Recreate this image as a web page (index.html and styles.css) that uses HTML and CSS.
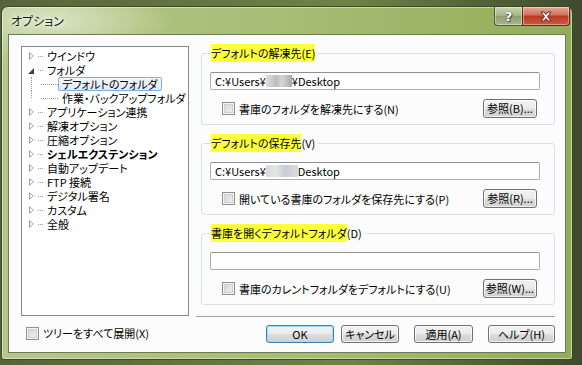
FILE: index.html
```html
<!DOCTYPE html>
<html lang="ja">
<head>
  <meta charset="UTF-8">
  <title>オプション</title>
  <link rel="stylesheet" href="styles.css">
</head>
<body>
  <div class="desktop">
    <div class="window">
      <div class="titlebar">
        <span class="title">オプション</span>
        <div class="caption">
          <span class="cap help">?</span>
          <span class="cap close">
            <svg width="14" height="11" viewBox="0 0 14 11"><path d="M2 1h3l2 2.5L9 1h3L8.5 5.5 12 10H9L7 7.5 5 10H2l3.5-4.5z" fill="#fff" stroke="#5a2a22" stroke-width="1"/></svg>
          </span>
        </div>
      </div>

      <div class="client">
        <div class="left">
          <div class="tree">
            <div class="node"><span class="exp"></span><span class="dots"></span><span class="label">ウインドウ</span></div>
            <div class="node"><span class="exp open"></span><span class="dots"></span><span class="label">フォルダ</span></div>
            <div class="node child"><span class="vline"></span><span class="dots long"></span><span class="label selected">デフォルトのフォルダ</span></div>
            <div class="node child last"><span class="vline"></span><span class="dots long"></span><span class="label">作業・バックアップフォルダ</span></div>
            <div class="node"><span class="exp"></span><span class="dots"></span><span class="label">アプリケーション連携</span></div>
            <div class="node"><span class="exp"></span><span class="dots"></span><span class="label">解凍オプション</span></div>
            <div class="node"><span class="exp"></span><span class="dots"></span><span class="label">圧縮オプション</span></div>
            <div class="node"><span class="exp"></span><span class="dots"></span><span class="label bold">シェルエクステンション</span></div>
            <div class="node"><span class="exp"></span><span class="dots"></span><span class="label">自動アップデート</span></div>
            <div class="node"><span class="exp"></span><span class="dots"></span><span class="label">FTP 接続</span></div>
            <div class="node"><span class="exp"></span><span class="dots"></span><span class="label">デジタル署名</span></div>
            <div class="node"><span class="exp"></span><span class="dots"></span><span class="label">カスタム</span></div>
            <div class="node"><span class="exp"></span><span class="dots"></span><span class="label">全般</span></div>
          </div>
          <label class="check expand-all"><span class="box"></span>ツリーをすべて展開(X)</label>
        </div>

        <div class="right">
          <div class="group">
            <div class="legend"><span class="mark">デフォルトの解凍先(E)</span></div>
            <div class="textbox">C:¥Users¥<span class="blur"></span>¥Desktop</div>
            <div class="row">
              <label class="check"><span class="box"></span>書庫のフォルダを解凍先にする(N)</label>
              <button class="btn browse">参照(B)...</button>
            </div>
          </div>

          <div class="group">
            <div class="legend"><span class="mark">デフォルトの保存先</span>(V)</div>
            <div class="textbox">C:¥Users¥<span class="blur wide"></span>Desktop</div>
            <div class="row">
              <label class="check"><span class="box"></span>開いている書庫のフォルダを保存先にする(P)</label>
              <button class="btn browse">参照(R)...</button>
            </div>
          </div>

          <div class="group">
            <div class="legend"><span class="mark">書庫を開くデフォルトフォルダ</span>(D)</div>
            <div class="textbox"></div>
            <div class="row">
              <label class="check"><span class="box"></span>書庫のカレントフォルダをデフォルトにする(U)</label>
              <button class="btn browse">参照(W)...</button>
            </div>
          </div>

          <div class="sep"></div>

          <div class="footer">
            <button class="btn ok">OK</button>
            <button class="btn cancel">キャンセル</button>
            <button class="btn apply">適用(A)</button>
            <button class="btn help-btn">ヘルプ(H)</button>
          </div>
        </div>
      </div>
    </div>
  </div>
</body>
</html>
```

FILE: styles.css
```css
body { margin: 0; padding: 0; font-family: "Noto Sans CJK JP", "Noto Sans", sans-serif; font-size: 11px; color: #000; font-feature-settings: "palt"; }
.desktop { width: 582px; height: 365px; background: linear-gradient(90deg, #55653a 0, #6f8246 60%, #3f4a2c 100%); padding: 6px 0 0 1px; box-sizing: border-box; overflow: hidden; }

.window { width: 572px; height: 354px; box-sizing: border-box; border: 1px solid #3b4a26; border-radius: 7px 7px 3px 3px; background: radial-gradient(ellipse 120px 40px at 50px 14px, #d9e3c2 0, rgba(217,227,194,0) 100%), linear-gradient(90deg, #b4c78a 0, #a6bd74 50%, #92ad58 100%); box-shadow: inset 0 0 0 1px rgba(255,255,255,0.45); display: flex; flex-direction: column; }

.titlebar { height: 27px; flex: none; display: flex; align-items: flex-start; justify-content: space-between; }
.title { margin: 7px 0 0 9px; font-size: 12px; line-height: 14px; color: #0f1a08; text-shadow: 0 0 6px #fff, 0 0 3px #fff; }
.caption { display: flex; margin-right: 2px; }
.cap { height: 18px; display: flex; align-items: center; justify-content: center; border: 1px solid #4d5a3a; border-top: none; box-shadow: inset 0 0 0 1px rgba(255,255,255,0.4); }
.help { width: 27px; border-radius: 0 0 0 4px; background: linear-gradient(#c9d4b0, #a4b383 50%, #8f9f6d 51%, #a9b78c); color: #fff; font-weight: bold; font-size: 13px; font-family: "DejaVu Sans", sans-serif; text-shadow: 0 0 1px #333, 1px 1px 1px #444; border-right: none; }
.close { width: 46px; border-radius: 0 0 4px 0; background: linear-gradient(#e8a898, #d0705c 45%, #b83a22 50%, #cc5a3e 100%); border-color: #5e2a20; }

.client { flex: 1; margin: 0 6px 6px 6px; background: #fcfcfc; border: 1px solid #6c7a56; display: flex; }

.left { width: 192px; flex: none; padding: 11px 0 0 12px; box-sizing: border-box; }
.tree { width: 168px; height: 270px; box-sizing: border-box; border: 1px solid #828790; background: #fff; padding-top: 2px; }
.node { height: 14px; display: flex; align-items: center; line-height: 14px; white-space: nowrap; }
.exp { width: 9px; height: 9px; margin-left: 5px; position: relative; }
.exp::before { content: ""; position: absolute; left: 2px; top: 0; border-left: 5px solid #a0a0a0; border-top: 4.5px solid transparent; border-bottom: 4.5px solid transparent; }
.exp::after { content: ""; position: absolute; left: 3px; top: 2px; border-left: 3px solid #fff; border-top: 2.5px solid transparent; border-bottom: 2.5px solid transparent; }
.exp.open::before { left: 1px; top: 2px; border-left: 6px solid transparent; border-bottom: 6px solid #404040; border-top: none; }
.exp.open::after { display: none; }
.dots { width: 5px; margin: 0 2px 0 2px; border-top: 1px dotted #9a9a9a; }
.dots.long { width: 17px; margin-left: 0; }
.vline { width: 10px; height: 14px; margin-left: 9px; border-left: 1px dotted #9a9a9a; box-sizing: border-box; }
.node.last .vline { height: 7px; align-self: flex-start; }
.label { padding: 0 2px; }
.label.bold { font-weight: bold; }
.label.selected { border: 1px solid #84acdd; border-radius: 2px; background: linear-gradient(#f2f8fe, #dcebfc); line-height: 12px; padding: 0 3px; margin-left: -2px; }

.check { display: flex; align-items: center; white-space: nowrap; line-height: 14px; }
.box { width: 11px; height: 11px; border: 1px solid #8f8f8f; background: linear-gradient(135deg, #d0d0d0, #f4f4f4); box-shadow: inset 0 0 0 1px #f4f4f4, inset 0 0 0 2px #cfcfcf; margin-right: 4px; flex: none; }
.expand-all { margin: 10px 0 0 5px; }

.right { width: 354px; padding-top: 18px; }
.group { height: 72px; box-sizing: border-box; border: 1px solid #d5dfe5; border-radius: 3px; margin-bottom: 18px; padding: 0 14px 0 8px; }
.group:nth-child(3) { margin-bottom: 11px; }
.legend { display: flex; width: max-content; margin: -10px 0 0 1px; padding-right: 3px; background: #fcfcfc; line-height: 18px; height: 18px; }
.mark { background: #fcff3a; }
.textbox { height: 18px; box-sizing: border-box; border: 1px solid #abadb3; border-top-color: #8c8f94; border-radius: 2px; background: #fff; margin-top: 10px; padding: 0 4px; line-height: 16px; display: flex; align-items: center; }
.blur { display: inline-block; width: 26px; height: 12px; background: linear-gradient(90deg, #e0e0e0, #bdbdbd 40%, #d6d6d6 60%, #a8a8a8); }
.blur.wide { width: 32px; background: linear-gradient(90deg, #d8d8d8, #e6e6e6 30%, #c8ccd4 60%, #dcdcdc); }
.row { display: flex; justify-content: space-between; align-items: center; height: 19px; margin-top: 9px; padding: 0 3px 0 12px; }

.btn { font-family: inherit; font-size: 11px; font-feature-settings: "palt"; color: #000; height: 19px; padding: 0; white-space: nowrap; line-height: 15px; border: 1px solid #707070; border-radius: 3px; background: linear-gradient(#f2f2f2, #ebebeb 50%, #dddddd 51%, #cfcfcf); box-shadow: inset 0 0 0 1px rgba(255,255,255,0.7); }
.browse { width: 54px; }

.sep { border-top: 1px solid #a0a0a0; margin-left: -5px; }
.footer { display: flex; justify-content: flex-end; gap: 7px; padding-top: 8px; }
.footer .btn { height: 18px; }
.ok { width: 68px; border-color: #3c7fb1; box-shadow: inset 0 0 0 1px #9ddff6; }
.cancel { width: 58px; }
.apply { width: 59px; margin-left: 8px; }
.help-btn { width: 67px; margin-left: 8px; }
```
